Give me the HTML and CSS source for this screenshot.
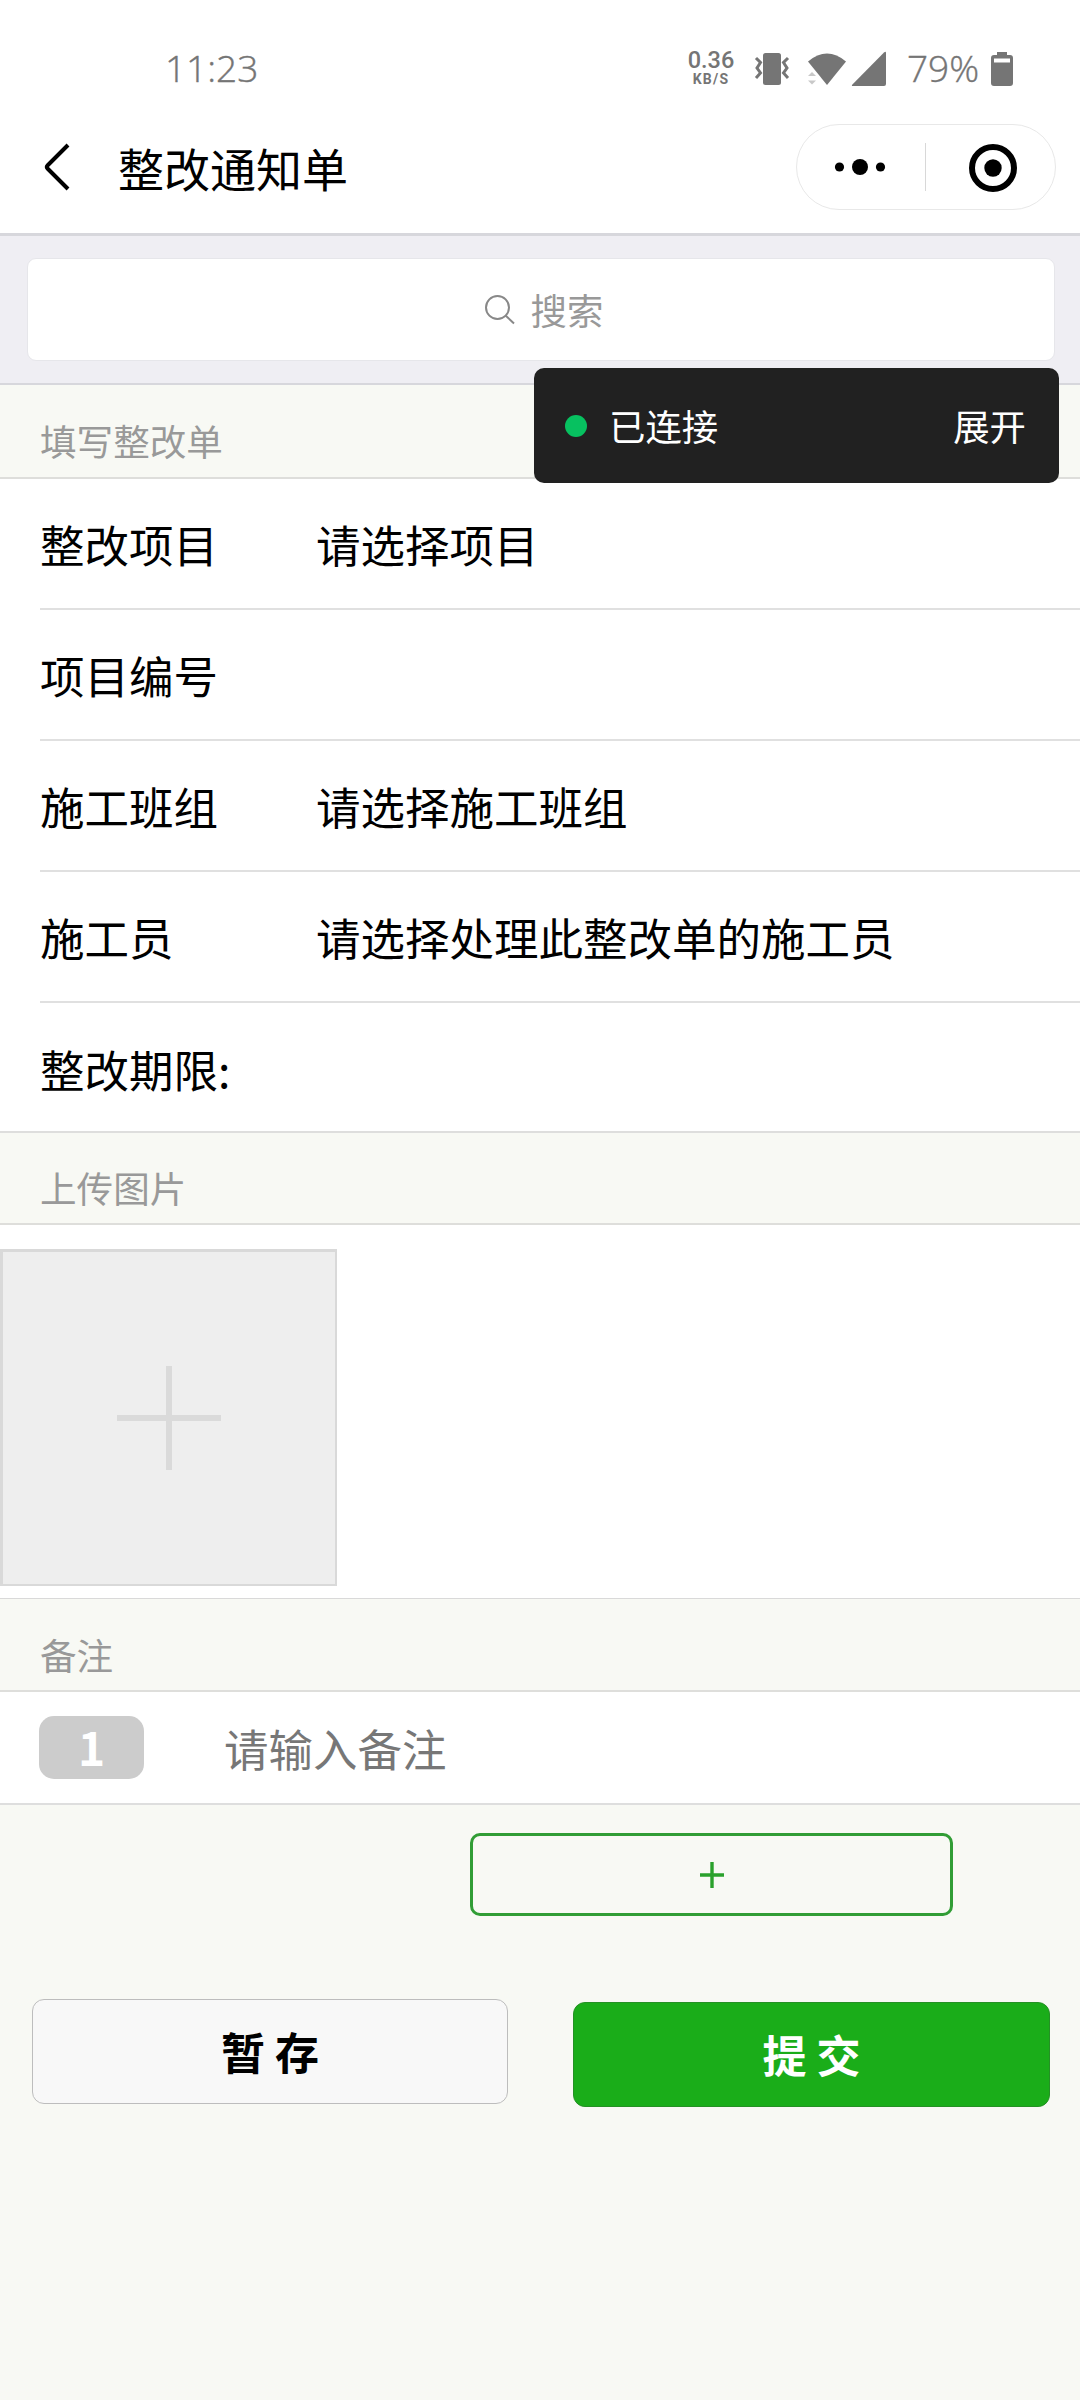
FILE: index.html
```html
<!DOCTYPE html>
<html lang="zh-CN">
<head>
<meta charset="utf-8">
<title>整改通知单</title>
<link rel="stylesheet" href="styles.css">
</head>
<body>
<div class="status">
  <span class="clock">11:23</span>
  <div class="speed"><span class="rate">0.36</span><span class="unit">KB/S</span></div>
  <svg class="vibrate" width="36" height="34" viewBox="0 0 36 34"><rect x="9" y="1" width="18" height="32" rx="2.500" fill="#757575"/><path d="M2 6l4.500 4.500L3 16l3.500 5L2 26M34 6l-4.500 4.500L33 16l-3.500 5L34 26" fill="none" stroke="#757575" stroke-width="3"/></svg>
  <svg class="wifi" width="40" height="34" viewBox="0 0 40 34"><path d="M1 9.500Q20-6.500 39 9.500L20 33z" fill="#757575"/><path d="M1 24l4-4 4 4zM1 28.500h8l-4 4z" fill="#c8c8c8"/></svg>
  <svg class="signal" width="36" height="36" viewBox="0 0 36 36"><path d="M35 2v31q0 2-2 2H2q-2 0-.6-1.500L33 1.500q2-1.500 2 .5z" fill="#757575"/></svg>
  <span class="percent">79%</span>
  <svg class="battery" width="24" height="36" viewBox="0 0 24 36"><path d="M7 1h10v3h3q3 0 3 3v25q0 3-3 3H4q-3 0-3-3V7q0-3 3-3h3z" fill="#757575"/><path d="M4 7.500h16v4H4z" fill="#fff"/></svg>
</div>
<header class="nav">
  <svg class="back" width="30" height="50" viewBox="0 0 30 50"><path d="M25 3L4.500 23.500q-1.500 1.500 0 3L25 47" fill="none" stroke="#000" stroke-width="4"/></svg>
  <h1 class="title">整改通知单</h1>
  <div class="capsule">
    <svg width="258" height="84" viewBox="0 0 258 84"><circle cx="42.500" cy="42" r="4.600"/><circle cx="63" cy="42" r="8"/><circle cx="83.500" cy="42" r="4.600"/><path d="M128.500 18v48" stroke="#d8d8d8"/><circle cx="196" cy="43" r="21" fill="none" stroke="#000" stroke-width="6"/><circle cx="196" cy="43" r="8.700"/></svg>
  </div>
</header>
<div class="search">
  <div class="box">
    <svg width="32" height="32" viewBox="0 0 32 32"><circle cx="13.500" cy="13.500" r="11.500"/><path d="M21.500 21.500l8.500 8"/></svg>
    <span>搜索</span>
  </div>
</div>
<div class="debug"><i class="dot"></i><span class="state">已连接</span><span>展开</span></div>
<h2 class="section">填写整改单</h2>
<div class="form">
  <div class="row"><span class="label">整改项目</span><span>请选择项目</span></div>
  <div class="row"><span class="label">项目编号</span></div>
  <div class="row"><span class="label">施工班组</span><span>请选择施工班组</span></div>
  <div class="row"><span class="label">施工员</span><span>请选择处理此整改单的施工员</span></div>
  <div class="row"><span class="label">整改期限:</span></div>
</div>
<h2 class="section upload-title">上传图片</h2>
<div class="upload">
  <div class="tile"><svg width="104" height="104" viewBox="0 0 104 104"><path d="M52 0v104M0 52h104" stroke="#dadada" stroke-width="6"/></svg></div>
</div>
<h2 class="section">备注</h2>
<div class="remark"><span class="badge">1</span><span class="hint">请输入备注</span></div>
<div class="add"><svg width="26" height="26" viewBox="0 0 26 26"><path d="M13 0v26M1 13h24" stroke="#2aa12c" stroke-width="3.400"/></svg></div>
<div class="actions">
  <div class="btn save">暂 存</div>
  <div class="btn submit">提 交</div>
</div>
</body>
</html>
```
FILE: styles.css
```css
* { box-sizing: border-box; }
body {
  margin: 0;
  width: 1080px;
  height: 2400px;
  position: relative;
  overflow: hidden;
  background: #f8f9f4;
  color: #000;
  font-family: "Noto Sans CJK SC", sans-serif;
  font-size: 44.5px;
  line-height: 1;
}
svg { display: block; flex: none; }
span, h1, h2 { white-space: nowrap; }
.status {
  height: 110px;
  padding: 27px 0 0 165px;
  display: flex;
  align-items: center;
  background: #fff;
  color: #757575;
}
.clock, .percent {
  font: 300 37px/1 "Open Sans", sans-serif;
  -webkit-text-stroke: .4px #757575;
  padding-bottom: 2px;
}
.clock { width: 522px; }
.speed {
  width: 48px;
  display: flex;
  flex-direction: column;
  align-items: center;
  font-family: Roboto, sans-serif;
  font-weight: 500;
}
.rate { font-size: 23.500px; line-height: 21px; }
.unit { font-size: 14px; line-height: 16px; letter-spacing: 1.2px; font-weight: 700; }
.vibrate { margin-left: 19px; }
.wifi { margin-left: 17px; }
.signal { margin-left: 4px; }
.percent { width: 81px; margin-left: 20px; }
.battery { margin-left: 2px; }
.nav {
  height: 126px;
  padding: 0 24px 9px 43px;
  display: flex;
  align-items: center;
  background: #fff;
  border-bottom: 3px solid #d7d7dc;
}
.title { margin: 0 0 0 45px; font-size: 46px; font-weight: 400; }
.capsule {
  margin-left: auto;
  border: 1px solid #e8e8e8;
  border-radius: 43px;
}
.search {
  height: 149px;
  padding: 22px 25px 22px 27px;
  background: #efeef3;
  border-bottom: 2px solid #d7d7dc;
}
.box {
  height: 103px;
  padding-left: 5px;
  display: flex;
  align-items: center;
  justify-content: center;
  gap: 15px;
  background: #fff;
  border: 1px solid #e6e6ea;
  border-radius: 9px;
  color: #999;
  font-size: 36.400px;
}
.box svg { fill: none; stroke: #888; stroke-width: 2; }
.debug {
  position: absolute;
  left: 534px;
  top: 368px;
  width: 525px;
  height: 115px;
  padding: 0 33px 0 31px;
  display: flex;
  align-items: center;
  background: #212121;
  border-radius: 10px;
  color: #fff;
  font-size: 36.400px;
}
.dot { width: 22px; height: 22px; border-radius: 50%; background: #07c160; }
.state { margin: 0 auto 0 22px; }
.section {
  margin: 0;
  height: 94px;
  padding: 21px 0 0 40px;
  display: flex;
  align-items: center;
  border-bottom: 2px solid #dededb;
  color: #999;
  font-size: 36.600px;
  font-weight: 400;
}
.form { padding-left: 40px; background: #fff; border-bottom: 2px solid #dededd; }
.row {
  height: 131px;
  padding-top: 1px;
  display: flex;
  align-items: center;
  border-bottom: 2px solid #e0e0e0;
}
.row:last-child { height: 128px; padding-top: 4px; border: 0; }
.label { width: 276px; }
.upload-title { height: 92px; }
.upload { height: 374px; padding-top: 24px; background: #fff; border-bottom: 1px solid #d9d9d9; }
.tile {
  width: 337px;
  height: 337px;
  padding-right: 1px;
  display: grid;
  place-items: center;
  background: #eee;
  border: 3px solid #d9d9d9;
  border-width: 3px 2px 2px 3px;
}
.upload + .section { height: 93px; }
.remark {
  height: 113px;
  padding: 0 0 1px 39px;
  display: flex;
  align-items: center;
  background: #fff;
  border-bottom: 2px solid #dedede;
}
.badge {
  width: 105px;
  height: 63px;
  border-radius: 15px;
  background: #ccc;
  color: #fff;
  font: 700 46px/61px "Noto Sans CJK SC", sans-serif;
  text-align: center;
}
.hint { margin: 2px 0 0 80px; color: #777; }
.add {
  width: 483px;
  height: 83px;
  margin: 28px 0 0 470px;
  display: grid;
  place-items: center;
  border: 3px solid #319d35;
  border-radius: 10px;
}
.actions {
  margin-top: 83px;
  padding: 0 30px 0 32px;
  display: flex;
  justify-content: space-between;
  align-items: flex-start;
}
.btn {
  width: 477px;
  height: 105px;
  padding-bottom: 2px;
  display: flex;
  align-items: center;
  justify-content: center;
  border-radius: 12px;
  font-size: 44px;
  font-weight: 700;
}
.save { width: 476px; background: #f8f8f8; border: 1px solid #bdbdbd; }
.submit { margin-top: 3px; background: #1aad19; border: 1px solid #249124; color: #fff; }
```
